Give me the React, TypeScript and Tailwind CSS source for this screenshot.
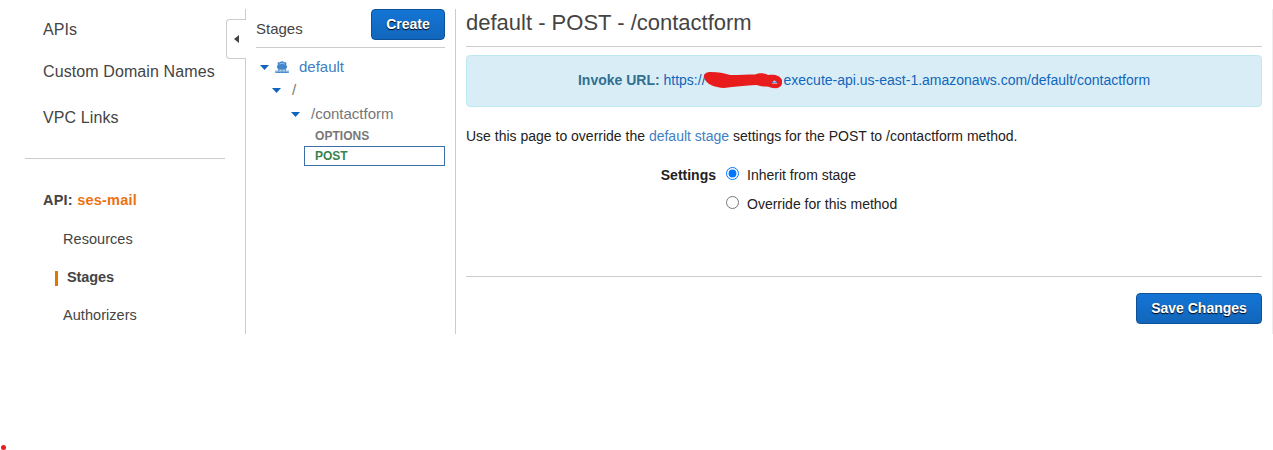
import { useState } from "react";

const resources = [
  { label: "APIs", row: "h-[41px]" },
  { label: "Custom Domain Names", row: "h-[43px]" },
  { label: "VPC Links", row: "h-[49px]" },
];

function Caret() {
  return (
    <svg width="9" height="5" viewBox="0 0 9 5" className="shrink-0">
      <path d="M0 0H9L4.5 5Z" fill="#1166bb" />
    </svg>
  );
}

function ShipIcon() {
  return (
    <svg width="14" height="12" viewBox="0 0 14 12" className="shrink-0" fill="#4285c9">
      <path d="M4.8 1.2Q7 -0.8 9.2 1.2H10.6Q11.3 1.2 11.3 2V4.6L12.3 5.2L10.9 8.8H3.1L1.7 5.2L2.7 4.6V2Q2.7 1.2 3.4 1.2Z" />
      <path d="M4.3 3.1L7 2.2L9.7 3.1" fill="none" stroke="#ffffff" strokeWidth="0.5" />
      <path d="M0.3 9.2L2 9.9L3.7 8.7L5.3 9.9L7 8.7L8.7 9.9L10.3 8.7L12 9.9L13.7 9.2V12H0.3Z" />
      <path d="M0.3 10.2L2 11L3.7 9.9L5.3 11L7 9.9L8.7 11L10.3 9.9L12 11L13.7 10.2" fill="none" stroke="#ffffff" strokeWidth="0.5" />
    </svg>
  );
}

function Sidebar() {
  return (
    <nav className="relative h-[325px] w-[246px] shrink-0 border-r border-[#cccccc] text-[#444444]">
      <ul className="pl-[43px] text-[16px] tracking-[0.1px]">
        {resources.map((r) => (
          <li key={r.label} className={`flex items-center ${r.row}`}>{r.label}</li>
        ))}
      </ul>
      <hr className="mt-4 ml-[25px] w-[200px] border-[#cccccc]" />
      <div className="mt-[23px] flex h-[38px] items-center pl-[43px] text-[14.5px] font-bold tracking-[0.22px] whitespace-pre">
        API: <span className="text-[#ec7211]">ses-mail</span>
      </div>
      <ul className="text-[14.5px]">
        <li className="flex h-[39px] items-center pl-[63px] tracking-[0.05px]">Resources</li>
        <li className="flex h-[38px] items-center pl-[55px] font-bold tracking-[-0.1px]">
          <span className="mr-[9px] h-[15px] w-[3px] bg-[#e07700]" />
          Stages
        </li>
        <li className="flex h-[38px] items-center pl-[63px] tracking-[0.05px]">Authorizers</li>
      </ul>
      <button aria-label="Collapse" className="absolute top-[10px] -right-px flex h-10 w-5 items-center justify-start rounded-l-[4px] border border-r-0 border-[#cccccc] bg-white pl-[7px]">
        <svg width="5" height="8" viewBox="0 0 5 8"><path d="M5 0V8L0 4Z" fill="#444444" /></svg>
      </button>
    </nav>
  );
}

function StageTree() {
  return (
    <section className="h-[325px] w-[210px] shrink-0 border-r border-[#cccccc] pr-[10px] pl-[10px] text-[15px] text-[#777777]">
      <div className="flex h-[39px] items-start justify-between border-b border-[#cccccc] text-[#444444]">
        <span className="pt-[9px] leading-[22px]">Stages</span>
        <button className="h-[31px] w-[74px] rounded-[4px] border border-[#0d5199] bg-linear-to-b from-[#1475d5] to-[#1166bb] text-[14px] font-bold text-white [text-shadow:0_1px_1px_#000000]">Create</button>
      </div>
      <div className="flex h-[38px] items-center pl-1 text-[#4080c4]">
        <Caret />
        <span className="mr-[10px] ml-[6px] flex"><ShipIcon /></span>
        default
      </div>
      <div className="flex h-[9px] items-center gap-[11px] pl-4"><Caret />/</div>
      <div className="mt-[6px] flex h-[26px] items-center gap-[11px] pl-[35px]"><Caret />/contactform</div>
      <div className="flex h-[17px] items-center pl-[59px] text-[12px] font-bold tracking-[0.05px]">OPTIONS</div>
      <div className="mt-[2px] ml-12 flex h-5 items-center border border-[#3d6fa8] pl-[10px] text-[12px] font-bold text-[#37834f]">POST</div>
    </section>
  );
}

function Redaction() {
  return (
    <svg width="78" height="18" viewBox="0 0 78 18" className="relative -top-[4px] -left-[1.5px] -my-1 inline-block align-[-5px]">
      <path d="M0 5C0 1 3 0 7 0C14 0 20 1 26 3C36 3 44 2.5 51 2.5C55 1 60 0.5 64 3C70 2 76 3 78 8C79 12 77 16 72 16.3C67 16.3 65 14 61 14.5C57 14.5 54 13 52 13C42 13.5 30 14.5 20 16C11 15.5 1 12 0 5Z" fill="#e81c1c" />
      <path d="M68 11.5Q69 8.5 70.5 8.5Q72.5 9.5 73.5 11.5Z" fill="#ffffff" />
      <path d="M68 10.2H73.5" stroke="#1166bb" strokeWidth="1" />
    </svg>
  );
}

export default function App() {
  const [mode, setMode] = useState("inherit");
  const options = [
    { id: "inherit", label: "Inherit from stage" },
    { id: "override", label: "Override for this method" },
  ];
  return (
    <div className="relative h-[450px] w-[1273px] overflow-hidden bg-white font-['Liberation_Sans',Arial,sans-serif]">
      <div className="flex pt-[9px]">
        <Sidebar />
        <StageTree />
        <main className="h-[325px] min-w-0 flex-1 border-r border-[#eeeeee] pr-[10px] pl-[10px] text-[14px] text-[#222222]">
          <h1 className="h-[38px] border-b border-[#cccccc] text-[22px] leading-[27px] text-[#444444]">default - POST - /contactform</h1>
          <div className="mt-2 flex h-[52px] items-center justify-center rounded-[4px] border border-[#bce8f1] bg-[#d9edf7] pb-[2px]">
            <p className="text-[#1166bb]">
              <b className="text-[#31708f]">Invoke URL:</b> https://<Redaction />execute-api.us-east-1.amazonaws.com/default/contactform
            </p>
          </div>
          <p className="mt-[18px] leading-[22px]">
            Use this page to override the <a className="text-[#4080c4]">default stage</a> settings for the POST to /contactform method.
          </p>
          <div className="mt-[14px] flex h-[116px] border-b border-[#cccccc]">
            <b className="w-[250px] text-right leading-[29px]">Settings</b>
            <div className="ml-[10px]">
              {options.map((o) => (
                <label key={o.id} className="flex h-[29px] items-center gap-2">
                  <input type="radio" name="settings" checked={mode === o.id} onChange={() => setMode(o.id)} className="mb-[4px] size-[13px]" />
                  {o.label}
                </label>
              ))}
            </div>
          </div>
          <div className="flex justify-end pt-4">
            <button className="h-[31px] w-[126px] rounded-[4px] border border-[#0d5199] bg-linear-to-b from-[#1475d5] to-[#1166bb] text-[14px] font-bold text-white [text-shadow:0_1px_1px_#000000]">Save Changes</button>
          </div>
        </main>
      </div>
      <span className="absolute top-[445px] left-px size-[5px] rounded-full bg-[#e81c1c]" />
    </div>
  );
}
